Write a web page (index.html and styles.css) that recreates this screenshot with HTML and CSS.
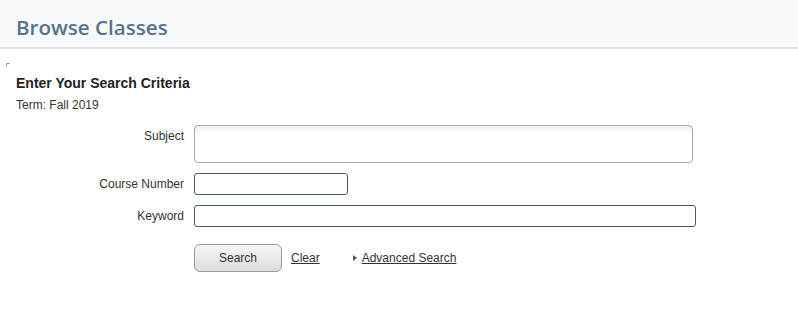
FILE: index.html
```html
<!DOCTYPE html>
<html>
<head>
<meta charset="utf-8">
<link rel="stylesheet" href="styles.css">
</head>
<body>
<header class="page-header">
  <h1 class="page-title">Browse Classes</h1>
</header>
<main class="content">
  <span class="corner"></span>
  <h2 class="section-title">Enter Your Search Criteria</h2>
  <p class="term">Term: Fall 2019</p>
  <form class="search-form">
    <label class="field-label label-subject">Subject</label>
    <div class="subject-box"></div>
    <label class="field-label">Course Number</label>
    <div><input class="text-input input-short" type="text"></div>
    <label class="field-label">Keyword</label>
    <div><input class="text-input input-long" type="text"></div>
    <span></span>
    <div class="actions">
      <button type="button" class="btn">Search</button>
      <a class="link" href="#">Clear</a>
      <span class="advanced"><span class="tri"></span><a class="link" href="#">Advanced Search</a></span>
    </div>
  </form>
</main>
</body>
</html>
```
FILE: styles.css
```css
html, body { margin: 0; padding: 0; background: #fff; }
body { font-family: "Liberation Sans", Arial, sans-serif; color: #333; font-size: 12px; }

.page-header {
  height: 47px;
  background: #f8f9fb;
  border-bottom: 2px solid #dee3e6;
  box-sizing: content-box;
  padding: 0 16px;
  display: flex;
  align-items: center;
}
.page-title {
  margin: 0;
  font-family: "Open Sans", sans-serif;
  font-weight: 600;
  font-size: 20.6px;
  color: #56738c;
  line-height: 30px;
  padding-top: 6px;
}

.content { position: relative; padding: 14px 16px 0; }
.corner {
  position: absolute; left: 6px; top: 14px;
  width: 3px; height: 3px;
  border-left: 1px solid #9aa5b1; border-top: 1px solid #9aa5b1;
}
.section-title {
  margin: 0;
  padding-top: 11px;
  font-size: 14px;
  font-weight: bold;
  color: #222;
  line-height: 18px;
}
.term { margin: 5px 0 0; line-height: 16px; color: #333; }

.search-form {
  display: grid;
  grid-template-columns: 168px 1fr;
  column-gap: 10px;
  row-gap: 10px;
  margin-top: 12px;
  align-items: center;
}
.field-label { text-align: right; color: #333; line-height: 14px; }
.label-subject { align-self: start; padding-top: 4px; }
.subject-box {
  width: 497px; height: 36px;
  border: 1px solid #aaa;
  border-radius: 4px;
  background: linear-gradient(#eee 0, #fff 8px, #fff 100%);
}
.text-input {
  display: block;
  box-sizing: border-box;
  height: 22px;
  border: 1px solid #4a5a6a;
  border-radius: 3px;
  background: #fff;
  margin: 0; padding: 0 4px;
}
.input-short { width: 154px; }
.input-long { width: 502px; }

.actions {
  display: flex; align-items: center;
  margin-top: 7px;
}
.btn {
  width: 88px; height: 28px;
  border: 1px solid #999;
  border-radius: 6px;
  background: linear-gradient(#f6f6f6, #dcdcdc);
  font-family: "Liberation Sans", Arial, sans-serif;
  font-size: 12px; color: #333;
  padding: 0;
}
.link { color: #333; text-decoration: underline; font-size: 12px; }
.btn + .link { margin-left: 9px; }
.advanced { display: flex; align-items: center; margin-left: 33px; }
.tri {
  width: 0; height: 0;
  border-left: 4px solid #555;
  border-top: 3px solid transparent;
  border-bottom: 3px solid transparent;
  margin-right: 5px;
}
```
